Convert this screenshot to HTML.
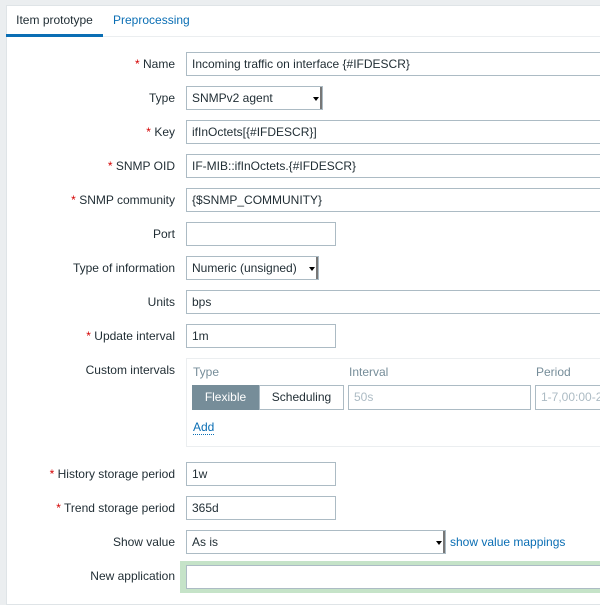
<!DOCTYPE html>
<html><head><style>
*{box-sizing:border-box;margin:0;padding:0}
body{width:600px;height:597px;background:#ebeef0;font-family:"Liberation Sans",Arial,sans-serif;font-size:12px;color:#1f2c33;position:relative;overflow:hidden}
.panel{position:absolute;left:6px;top:5px;width:600px;height:600px;background:#fff;border:1px solid #dfe4e7}
.tabs{position:absolute;left:6px;top:5px;width:600px;height:32px;border-bottom:1px solid #ebeef0}
.tab{position:absolute;top:0;height:32px;line-height:31px;font-size:12px}
.t1{left:0;width:97px;text-align:center;border-bottom:3px solid #0a6eb4;color:#1f2c33}
.t2{left:107px;color:#0a6eb4}
.w{position:absolute;left:0;top:1px;width:600px;height:600px}
.lbl{position:absolute;right:425px;text-align:right;white-space:nowrap;line-height:14px}
.req:before{content:"* ";color:#d40000}
.in{position:absolute;left:186px;height:24px;border:1px solid #acbbc4;background:#fff;padding:0 5px;line-height:22px;white-space:nowrap;overflow:hidden}
.sel:after{content:"";position:absolute;right:0;top:0;width:10px;height:22px;border-right:2px solid #777;border-bottom:2px solid #777}
.arr{position:absolute;right:3px;top:10px;width:0;height:0;border-left:3px solid transparent;border-right:3px solid transparent;border-top:4px solid #000;z-index:2}
a{color:#0a6eb4;text-decoration:none}
</style></head><body>
<div class="panel"></div>
<div class="tabs"><div class="tab t1">Item prototype</div><div class="tab t2">Preprocessing</div></div>
<div class="w">
<div class="lbl req" style="top:56px">Name</div>
<div class="in" style="top:51px;width:420px">Incoming traffic on interface {#IFDESCR}</div>
<div class="lbl" style="top:90px">Type</div>
<div class="in sel" style="top:85px;width:137px">SNMPv2 agent<span class="arr"></span></div>
<div class="lbl req" style="top:124px">Key</div>
<div class="in" style="top:119px;width:420px">ifInOctets[{#IFDESCR}]</div>
<div class="lbl req" style="top:158px">SNMP OID</div>
<div class="in" style="top:153px;width:420px">IF-MIB::ifInOctets.{#IFDESCR}</div>
<div class="lbl req" style="top:192px">SNMP community</div>
<div class="in" style="top:187px;width:420px">{$SNMP_COMMUNITY}</div>
<div class="lbl" style="top:226px">Port</div>
<div class="in" style="top:221px;width:150px"></div>
<div class="lbl" style="top:260px">Type of information</div>
<div class="in sel" style="top:255px;width:133px">Numeric (unsigned)<span class="arr"></span></div>
<div class="lbl" style="top:294px">Units</div>
<div class="in" style="top:289px;width:420px">bps</div>
<div class="lbl req" style="top:328px">Update interval</div>
<div class="in" style="top:323px;width:150px">1m</div>
<div class="lbl" style="top:362px">Custom intervals</div>
<div style="position:absolute;left:186px;top:357px;width:420px;height:89px;border:1px solid #ebeef0">
 <div style="position:absolute;left:6px;top:6px;color:#768d99">Type</div>
 <div style="position:absolute;left:162px;top:6px;color:#768d99">Interval</div>
 <div style="position:absolute;left:349px;top:6px;color:#768d99">Period</div>
 <div style="position:absolute;left:5px;top:26px;width:67px;height:25px;background:#768d99;color:#fff;line-height:24px;text-align:center">Flexible</div>
 <div style="position:absolute;left:72px;top:26px;width:85px;height:25px;border:1px solid #acbbc4;line-height:23px;text-align:center">Scheduling</div>
 <div style="position:absolute;left:161px;top:26px;width:183px;height:25px;border:1px solid #acbbc4;line-height:23px;padding-left:5px;color:#acbbc4">50s</div>
 <div style="position:absolute;left:348px;top:26px;width:80px;height:25px;border:1px solid #acbbc4;line-height:23px;padding-left:5px;color:#acbbc4;white-space:nowrap;overflow:hidden">1-7,00:00-24:00</div>
 <div style="position:absolute;left:6px;top:62px;color:#0a6eb4;border-bottom:1px dotted #0a6eb4;line-height:13px">Add</div>
</div>
<div class="lbl req" style="top:466px">History storage period</div>
<div class="in" style="top:461px;width:150px">1w</div>
<div class="lbl req" style="top:500px">Trend storage period</div>
<div class="in" style="top:495px;width:150px">365d</div>
<div class="lbl" style="top:534px">Show value</div>
<div class="in sel" style="top:529px;width:260px">As is<span class="arr"></span></div>
<a style="position:absolute;left:450px;top:534px">show value mappings</a>
<div class="lbl" style="top:568px">New application</div>
<div style="position:absolute;left:180px;top:560px;width:430px;height:32px;background:#c5e3c8"></div>
<div class="in" style="top:564px;width:420px"></div>
</div>
</body></html>
